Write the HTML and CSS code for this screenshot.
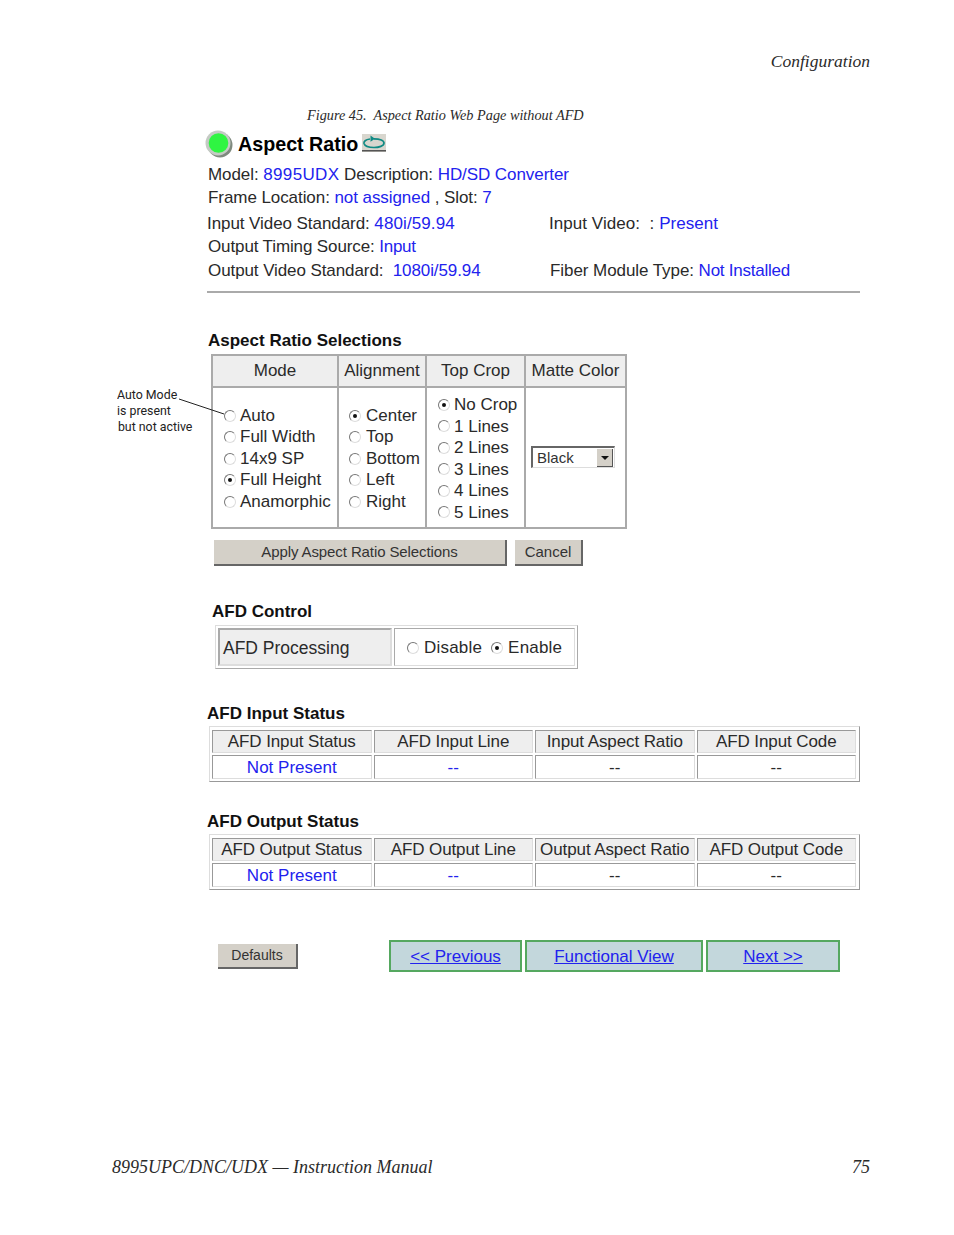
FILE: index.html
```html
<!DOCTYPE html>
<html lang="en">
<head>
<meta charset="utf-8">
<title>Aspect Ratio Web Page without AFD</title>
<link rel="stylesheet" href="styles.css">
</head>
<body>
<div class="page">
  <div class="running-head">Configuration</div>
  <div class="caption">Figure 45.&nbsp; Aspect Ratio Web Page without AFD</div>

  <div class="title-row">
    <svg class="led" width="30" height="30" viewBox="0 0 30 30" aria-hidden="true">
      <circle cx="16" cy="16" r="12.5" fill="#7f8a7f"/>
      <circle cx="14" cy="14" r="12.5" fill="#c4cac4"/>
      <circle cx="14.5" cy="14" r="9.8" fill="#2ff542"/>
    </svg>
    <h1 class="title">Aspect Ratio</h1>
    <svg class="refresh" width="24" height="18" viewBox="0 0 24 18" aria-hidden="true">
      <rect width="24" height="18" fill="#d8d6ce"/>
      <path d="M8 5C3.5 5.6 1.5 7.5 2 9.5C3 12.5 8 13.5 12 13.5C17 13.5 22 12 22 9C22 6.5 18 4.8 12 4.8" fill="none" stroke="#108a84" stroke-width="1.7"/>
      <path d="M8.5 1.5L13 4.8L8.5 7.8Z" fill="#108a84"/>
      <rect y="16" width="24" height="1.5" fill="#555"/>
    </svg>
  </div>

  <div class="info">
    <div class="line line-in">Model: <span class="val val-wide">8995UDX</span> Description: <span class="val">HD/SD Converter</span></div>
    <div class="line line-in">Frame Location: <span class="val">not assigned</span> , Slot: <span class="val">7</span></div>
    <div class="line line-gap"><span class="col-a">Input Video Standard: <span class="val val-wide-s">480i/59.94</span></span><span class="col-c">Input Video: &nbsp;: <span class="val">Present</span></span></div>
    <div class="line line-in line-timing">Output Timing Source: <span class="val val-tight">Input</span></div>
    <div class="line line-last"><span class="col-a col-a-out">Output Video Standard: &nbsp;<span class="val">1080i/59.94</span></span><span class="col-b">Fiber Module Type: <span class="val val-tight">Not Installed</span></span></div>
  </div>
  <div class="rule"></div>

  <h2 class="heading heading-ar">Aspect Ratio Selections</h2>
  <div class="ar-table-wrap">
    <div class="callout">Auto Mode<br>is present<br><span class="callout-last">but not active</span></div>
    <svg class="leader" width="50" height="20" viewBox="0 0 50 20" aria-hidden="true"><path d="M0 1L45 16" stroke="#222" stroke-width="1"/></svg>
    <div class="ar-table">
      <div class="ar-head">Mode</div>
      <div class="ar-head">Alignment</div>
      <div class="ar-head">Top Crop</div>
      <div class="ar-head">Matte Color</div>
      <div class="ar-cell pad-a">
        <div class="opt"><span class="radio"></span>Auto</div>
        <div class="opt"><span class="radio"></span>Full Width</div>
        <div class="opt"><span class="radio"></span>14x9 SP</div>
        <div class="opt"><span class="radio on"></span>Full Height</div>
        <div class="opt"><span class="radio"></span>Anamorphic</div>
      </div>
      <div class="ar-cell pad-b">
        <div class="opt"><span class="radio on"></span>Center</div>
        <div class="opt"><span class="radio"></span>Top</div>
        <div class="opt"><span class="radio"></span>Bottom</div>
        <div class="opt"><span class="radio"></span>Left</div>
        <div class="opt"><span class="radio"></span>Right</div>
      </div>
      <div class="ar-cell pad-a">
        <div class="opt"><span class="radio on"></span>No Crop</div>
        <div class="opt"><span class="radio"></span>1 Lines</div>
        <div class="opt"><span class="radio"></span>2 Lines</div>
        <div class="opt"><span class="radio"></span>3 Lines</div>
        <div class="opt"><span class="radio"></span>4 Lines</div>
        <div class="opt"><span class="radio"></span>5 Lines</div>
      </div>
      <div class="ar-cell matte">
        <div class="select"><span class="select-text">Black</span><span class="select-btn"></span></div>
      </div>
    </div>
  </div>

  <div class="btn-row">
    <div class="btn btn-apply">Apply Aspect Ratio Selections</div>
    <div class="btn btn-cancel">Cancel</div>
  </div>

  <h2 class="heading heading-afd">AFD Control</h2>
  <div class="afd-box">
    <div class="afd-label">AFD Processing</div>
    <div class="afd-value">
      <span class="afd-opt"><span class="radio"></span>Disable</span>
      <span class="afd-opt"><span class="radio on"></span>Enable</span>
    </div>
  </div>

  <h2 class="heading heading-in">AFD Input Status</h2>
  <div class="status">
    <div class="st-head">AFD Input Status</div>
    <div class="st-head">AFD Input Line</div>
    <div class="st-head">Input Aspect Ratio</div>
    <div class="st-head">AFD Input Code</div>
    <div class="st-cell val">Not Present</div>
    <div class="st-cell val">--</div>
    <div class="st-cell">--</div>
    <div class="st-cell">--</div>
  </div>

  <h2 class="heading heading-out">AFD Output Status</h2>
  <div class="status">
    <div class="st-head">AFD Output Status</div>
    <div class="st-head">AFD Output Line</div>
    <div class="st-head">Output Aspect Ratio</div>
    <div class="st-head">AFD Output Code</div>
    <div class="st-cell val">Not Present</div>
    <div class="st-cell val">--</div>
    <div class="st-cell">--</div>
    <div class="st-cell">--</div>
  </div>

  <div class="nav-row">
    <div class="btn btn-defaults">Defaults</div>
    <nav class="nav">
      <a class="nav-link nav-prev" href="#">&lt;&lt; Previous</a>
      <a class="nav-link nav-func" href="#">Functional View</a>
      <a class="nav-link nav-next" href="#">Next &gt;&gt;</a>
    </nav>
  </div>

  <footer class="footer">
    <span>8995UPC/DNC/UDX — Instruction Manual</span>
    <span>75</span>
  </footer>
</div>
</body>
</html>
```
FILE: styles.css
```css
* { box-sizing: border-box; }
html, body { margin: 0; padding: 0; background: #fff; }
.page {
  width: 954px;
  height: 1235px;
  display: flex;
  flex-direction: column;
  overflow: hidden;
  font-family: "Liberation Sans", Arial, sans-serif;
  font-size: 17px;
  color: #2a2a2a;
}
.running-head {
  margin-top: 50px;
  padding-right: 84px;
  height: 22px;
  text-align: right;
  font: italic 17.5px/22px "Liberation Serif", serif;
}
.caption {
  margin: 35px 0 0 307px;
  font: italic 14.25px/16px "Liberation Serif", serif;
  height: 16px;
}
.title-row {
  margin: 7px 0 0 204px;
  height: 28px;
  display: flex;
  align-items: center;
}
.led { flex: none; margin-right: -2px; }
.title {
  margin: 0 4px 0 6px;
  font-size: 19.7px;
  line-height: 28px;
  font-weight: bold;
  color: #000;
}
.refresh { flex: none; margin-top: -2px; }
.info { margin: 5px 0 0 207px; }
.line { height: 23px; line-height: 23px; display: flex; white-space: pre-wrap; letter-spacing: -0.07px; }
.line-in { padding-left: 1px; }
.line-gap { margin-top: 3px; }
.line-last { margin-top: 1px; }
.line-timing { letter-spacing: -0.12px; }
.col-a { width: 342px; white-space: pre-wrap; }
.col-a-out { padding-left: 1px; letter-spacing: -0.09px; }
.col-b { margin-left: 1px; }
.col-c { letter-spacing: 0.05px; }
.val { color: #2222ee; }
.val-wide { letter-spacing: 0.35px; }
.val-wide-s { letter-spacing: 0.1px; }
.val-tight { letter-spacing: -0.25px; }
.rule {
  margin: 9px 0 0 207px;
  width: 653px;
  height: 2px;
  background: #aaa;
}
.heading {
  margin: 0;
  height: 20px;
  font-size: 17px;
  line-height: 22px;
  font-weight: bold;
  color: #111;
}
.heading-ar { margin: 37px 0 0 208px; }
.heading-afd { margin: 35px 0 0 212px; }
.heading-in { margin: 34px 0 0 207px; }
.heading-out { margin: 29px 0 0 207px; }

.ar-table-wrap { position: relative; margin: 4px 0 0 211px; width: 416px; }
.callout {
  position: absolute;
  left: -94px;
  top: 32px;
  font-family: "Roboto", sans-serif;
  font-size: 13.5px;
  line-height: 16px;
  color: #222;
  white-space: nowrap;
  transform: scaleX(0.915);
  transform-origin: left top;
}
.callout-last { margin-left: 1px; }
.leader { position: absolute; left: -32px; top: 44px; }
.ar-table {
  display: grid;
  grid-template-columns: 124px 86px 97px 99px;
  grid-template-rows: 30px 139px;
  gap: 2px;
  border: 2px solid #aaa;
  background: #aaa;
}
.ar-head {
  display: flex;
  align-items: center;
  justify-content: center;
  background: #eee;
  white-space: nowrap;
}
.ar-cell {
  background: #fff;
  display: flex;
  flex-direction: column;
  justify-content: center;
  padding-top: 2px;
}
.pad-a { padding-left: 11px; }
.pad-b { padding-left: 10px; }
.pad-b .radio { margin-right: 5px; }
.opt { height: 21.5px; line-height: 21.5px; display: flex; align-items: center; white-space: nowrap; }
.radio {
  position: relative;
  flex: none;
  display: inline-block;
  width: 12px;
  height: 12px;
  margin-right: 4px;
  border: 1px solid;
  border-color: #777 #ddd #ddd #777;
  border-radius: 50%;
  background: #fff;
}
.radio.on::after {
  content: "";
  position: absolute;
  left: 3px;
  top: 3px;
  width: 4px;
  height: 4px;
  border-radius: 50%;
  background: #111;
}
.matte { align-items: flex-start; padding: 0 0 1px 5px; }
.select {
  width: 84px;
  height: 22px;
  display: flex;
  align-items: center;
  justify-content: space-between;
  padding: 0 1px 0 4px;
  border: 1px solid;
  border-width: 2px 1px 1px 2px;
  border-color: #666 #ddd #ddd #666;
  background: #fff;
}
.select-text { font-size: 15px; color: #333; }
.select-btn {
  position: relative;
  width: 16px;
  height: 18px;
  background: #d4d0c8;
  border-right: 1px solid #555;
  border-bottom: 1px solid #555;
}
.select-btn::after {
  content: "";
  position: absolute;
  left: 4px;
  top: 7px;
  border: 4px solid transparent;
  border-top: 4px solid #111;
  border-bottom: 0;
}
.btn-row { display: flex; gap: 8px; margin: 11px 0 0 214px; }
.btn {
  display: flex;
  align-items: center;
  justify-content: center;
  background: #d4d0c8;
  border-right: 2px solid #666;
  border-bottom: 2px solid #666;
  font-size: 15px;
  color: #333;
  height: 26px;
  padding-bottom: 2px;
}
.btn-apply { width: 293px; letter-spacing: -0.1px; }
.btn-cancel { width: 68px; }

.afd-box {
  margin: 4px 0 0 215px;
  width: 363px;
  height: 44px;
  padding: 2px;
  display: flex;
  gap: 2px;
  border: 1px solid;
  border-color: #ddd #aaa #aaa #ddd;
}
.afd-label {
  width: 174px;
  padding: 2px 0 0 3px;
  display: flex;
  align-items: center;
  background: #eee;
  border: 2px solid;
  border-color: #aaa #ddd #ddd #aaa;
  font-size: 17.5px;
}
.afd-value {
  flex: 1;
  display: flex;
  align-items: center;
  gap: 9px;
  padding: 2px 0 0 12px;
  border: 1px solid;
  border-color: #aaa #ddd #ddd #aaa;
  letter-spacing: 0.2px;
}
.afd-opt { display: flex; align-items: center; }
.afd-opt .radio { margin-right: 5px; }

.status {
  margin: 3px 0 0 209px;
  width: 651px;
  height: 56px;
  padding: 3px 3px 2px 2px;
  display: grid;
  grid-template-columns: repeat(4, 1fr);
  grid-template-rows: 23px 24px;
  gap: 2px;
  border: 1px solid;
  border-color: #ddd #999 #999 #ddd;
}
.st-head, .st-cell {
  display: flex;
  align-items: center;
  justify-content: center;
  white-space: nowrap;
  border: 1px solid;
  border-color: #999 #ddd #ddd #999;
}
.st-head { background: #eee; letter-spacing: -0.1px; }
.st-cell { background: #fff; padding-top: 2px; }

.nav-row { display: flex; align-items: flex-start; margin: 50px 0 0 218px; }
.btn-defaults { width: 80px; height: 25px; margin-top: 4px; font-size: 14px; }
.nav { display: flex; gap: 3px; margin-left: 91px; }
.nav-link {
  height: 32px;
  padding-top: 2px;
  display: flex;
  align-items: center;
  justify-content: center;
  background: #c3d7dc;
  border: 2px solid #55a860;
  color: #2222ee;
  font-size: 17px;
}
.nav-prev { width: 133px; }
.nav-func { width: 178px; }
.nav-next { width: 134px; }

.footer {
  margin-top: auto;
  margin-bottom: 57px;
  padding: 0 84px 0 112px;
  height: 22px;
  display: flex;
  justify-content: space-between;
  font: italic 18px/22px "Liberation Serif", serif;
}
```
